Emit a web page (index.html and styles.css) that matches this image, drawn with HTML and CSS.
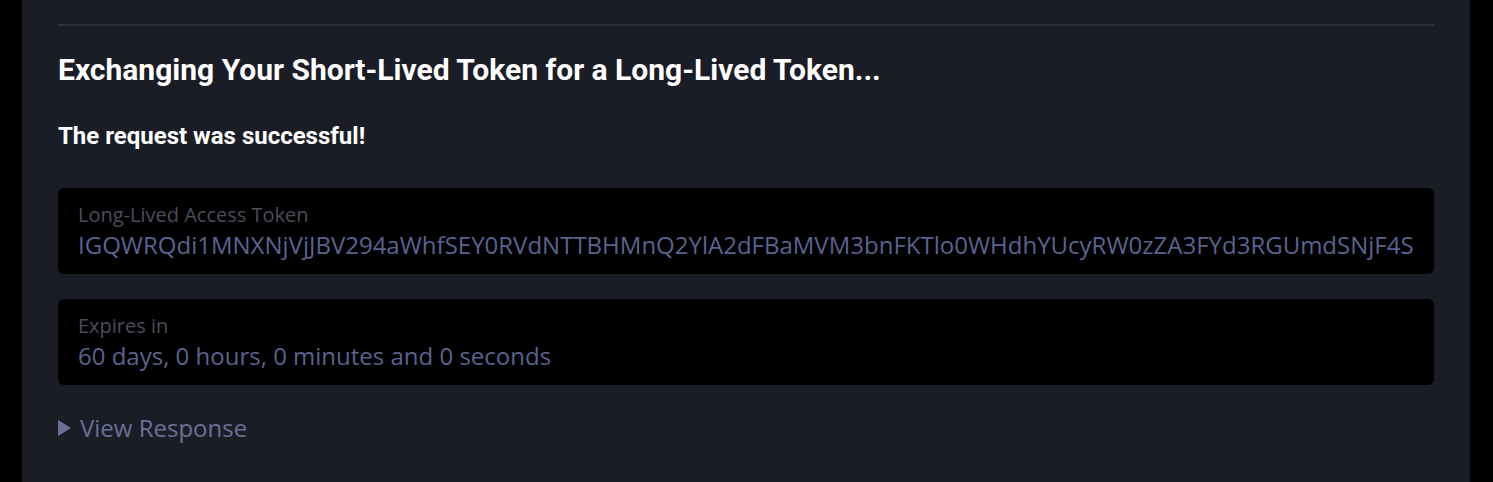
FILE: index.html
```html
<!DOCTYPE html>
<html lang="en">

<head>
    <meta charset="UTF-8" />
    <meta name="viewport" content="width=device-width, initial-scale=1" />
    <title>Exchange Token</title>
    <link rel="stylesheet" href="styles.css">
</head>

<body>
    <div class="panel">
        <hr class="divider" />

        <h2 class="step-title">Exchanging Your Short-Lived Token for a Long-Lived Token...</h2>

        <h3 class="status">The request was successful!</h3>

        <div class="field">
            <div class="field-label">Long-Lived Access Token</div>
            <div class="field-value">IGQWRQdi1MNXNjVjJBV294aWhfSEY0RVdNTTBHMnQ2YlA2dFBaMVM3bnFKTlo0WHdhYUcyRW0zZA3FYd3RGUmdSNjF4S3pVT2JxcUhpWjlfLXNMZAkRZAdnBfbWt5ZAjVGaWZA</div>
        </div>

        <div class="field">
            <div class="field-label">Expires in</div>
            <div class="field-value">60 days, 0 hours, 0 minutes and 0 seconds</div>
        </div>

        <details class="response">
            <summary>View Response</summary>
        </details>
    </div>
</body>

</html>
```

FILE: styles.css
```css
* {
    box-sizing: border-box;
}

body {
    margin: 0;
    background: #000;
    font-family: "Open Sans", sans-serif;
    height: 100vh;
    overflow: hidden;
}

.panel {
    margin: 0 23px 0 22px;
    background: #1b1d26;
    min-height: 100vh;
    padding: 24px 36px 20px;
}

.divider {
    border: none;
    height: 2px;
    background: #2e303f;
    margin: 0;
}

.step-title {
    font-family: Roboto, sans-serif;
    font-weight: 700;
    font-size: 30px;
    color: #fff;
    margin: 26px 0 0;
    line-height: 36px;
}

.status {
    font-family: Roboto, sans-serif;
    font-weight: 700;
    font-size: 24px;
    color: #fff;
    margin: 33px 0 0;
    line-height: 30px;
}

.field {
    background: #000;
    border-radius: 6px;
    padding: 13px 20px;
    margin-top: 37px;
    height: 86px;
}

.field + .field {
    margin-top: 25px;
}

.field-label {
    font-size: 20px;
    color: #4a4c5c;
    line-height: 28px;
}

.field-value {
    font-size: 24px;
    color: #5a6390;
    line-height: 32px;
    white-space: nowrap;
    overflow: hidden;
}

.response {
    margin-top: 27px;
}

.response summary {
    font-size: 24px;
    line-height: 32px;
    color: #6a7096;
    cursor: pointer;
    list-style: none;
    display: flex;
    align-items: center;
    gap: 9px;
}

.response summary::before {
    content: "";
    border-left: 13px solid #6a7096;
    border-top: 8px solid transparent;
    border-bottom: 8px solid transparent;
}
```
